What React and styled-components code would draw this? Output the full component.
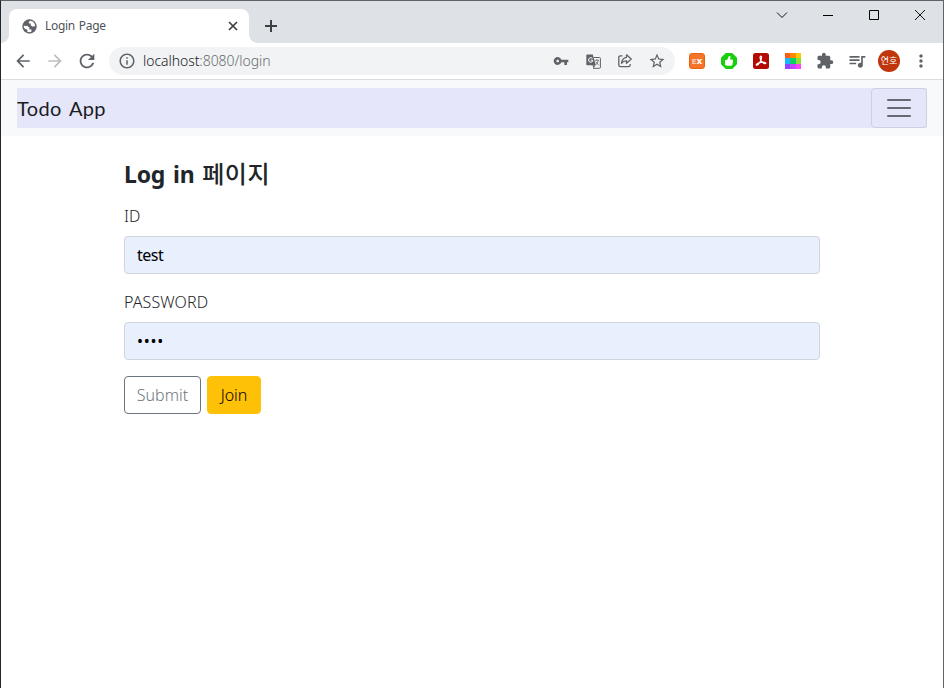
import React from "react";
import styled, { createGlobalStyle } from "styled-components";
import {
  MdArrowBack, MdArrowForward, MdRefresh, MdInfoOutline, MdVpnKey,
  MdStarBorder, MdExtension, MdQueueMusic, MdMoreVert,
} from "react-icons/md";

const Global = createGlobalStyle`
  *, *::before, *::after { box-sizing: border-box; }
  body { margin: 0; overflow: hidden; background: #fff; }
  button, input { font: inherit; }
`;

const Window = styled.div`
  display: flex;
  flex-direction: column;
  width: 944px;
  height: 688px;
  border: 1px solid #626366;
  border-left-color: #25262a;
  border-bottom: 0;
  background: #fff;
  font-family: "Noto Sans", "Noto Sans CJK KR", sans-serif;
`;

const TabStrip = styled.header`
  display: flex;
  height: 42px;
  flex: none;
  padding-left: 8px;
  background: #dee1e6;
`;

const Tab = styled.div`
  position: relative;
  display: flex;
  align-items: center;
  width: 240px;
  height: 34px;
  margin-top: 8px;
  padding: 0 9px 0 13px;
  border-radius: 8px 8px 0 0;
  background: #fff;
  color: #5f6368;
  &::before, &::after {
    content: "";
    position: absolute;
    bottom: 0;
    width: 8px;
    height: 8px;
  }
  &::before { left: -8px; background: radial-gradient(circle at 0 0, transparent 7.5px, #fff 8px); }
  &::after { right: -8px; background: radial-gradient(circle at 100% 0, transparent 7.5px, #fff 8px); }
`;

const TabTitle = styled.span`
  flex: 1;
  margin-left: 8px;
  font-size: 12px;
  font-weight: 400;
  letter-spacing: -0.3px;
  word-spacing: 1px;
  line-height: 16px;
  color: #505458;
`;

const PlainButton = styled.button`
  display: grid;
  place-items: center;
  flex: none;
  width: ${(p) => p.$w || 32}px;
  height: ${(p) => p.$h || 32}px;
  padding: 0;
  border: 0;
  background: none;
  color: ${(p) => p.$color || "#5f6368"};
  svg { display: block; }
`;

const NewTab = styled(PlainButton)`
  margin: 9px 0 0 6px;
`;

const Captions = styled.div`
  display: flex;
  margin-left: auto;
`;

const Toolbar = styled.div`
  display: flex;
  align-items: center;
  flex: none;
  height: 37px;
  padding-left: 6px;
  border-bottom: 1px solid #dadce0;
`;

const Omnibox = styled.div`
  display: flex;
  align-items: center;
  width: 566px;
  height: 28px;
  margin: 0 6px;
  padding: 0 2px 0 9px;
  border-radius: 14px;
  background: #f1f3f4;
  color: #5f6368;
`;

const Address = styled.span`
  flex: 1;
  margin-left: 7px;
  font-size: 14px;
  letter-spacing: -0.06px;
  line-height: 20px;
  color: #696d72;
  font-weight: 350;
`;

const Host = styled.span`
  color: #202124;
`;

const Avatar = styled.span`
  display: grid;
  place-items: center;
  width: 22px;
  height: 22px;
  border-radius: 50%;
  background: #bf360c;
  color: #fff;
  font: 9px/12px "Noto Sans CJK KR", sans-serif;
`;

const Badge = styled.span`
  display: grid;
  place-items: center;
  width: 16px;
  height: 16px;
  border-radius: 3px;
  border: 1px solid #e8640c;
  background: #f4742a;
  color: #fff;
  font: bold 9px/14px "DejaVu Sans", sans-serif;
`;

const BadgeFaint = styled.span`
  font-size: 7px;
  opacity: 0.65;
`;

const Navbar = styled.nav`
  flex: none;
  height: 56px;
  padding: 8px 16px;
  background: #f8f9fa;
`;

const NavInner = styled.div`
  display: flex;
  align-items: center;
  justify-content: space-between;
  height: 40px;
  background: #e6e6fa;
`;

const Brand = styled.a`
  font-family: Lato, sans-serif;
  font-size: 20px;
  line-height: 30px;
  letter-spacing: 0.35px;
  word-spacing: 2.5px;
  color: #1b1c1e;
`;

const Toggler = styled.button`
  display: grid;
  place-items: center;
  width: 56px;
  height: 40px;
  padding: 0;
  border: 1px solid #cfcfe2;
  border-radius: 4px;
  background: transparent;
  color: #676873;
`;

const Container = styled.main`
  width: 720px;
  margin: 0 auto;
  padding: 22px 12px 0;
`;

const Title = styled.h2`
  height: 29px;
  margin: 0 0 17px;
  font: 700 23px/29px "Noto Sans", sans-serif;
  letter-spacing: -0.2px;
  word-spacing: 2px;
  color: #212529;
`;

const Korean = styled.span`
  font-family: "Noto Sans CJK KR", sans-serif;
  font-size: 24px;
  font-weight: 500;
  letter-spacing: 0.6px;
`;

const Field = styled.div`
  display: flex;
  flex-direction: column;
  margin-bottom: 16px;
`;

const Label = styled.label`
  height: 24px;
  margin-bottom: 8px;
  font-size: 16px;
  font-weight: 350;
  line-height: 24px;
  letter-spacing: 0.1px;
  color: #212529;
`;

const Input = styled.input`
  width: 100%;
  height: 38px;
  padding: 6px 12px;
  border: 1px solid #ced4da;
  border-radius: 4px;
  outline: 0;
  background: #e8f0fe;
  color: #000;
  font-size: 16px;
  line-height: 24px;
  letter-spacing: ${(p) => p.$tracking || 0}px;
`;

const Actions = styled.div`
  display: flex;
  gap: 6px;
`;

const Button = styled.button`
  width: ${(p) => p.$w}px;
  height: 38px;
  padding: 0;
  border: 1px solid ${(p) => (p.$warning ? "#ffc107" : "#6c757d")};
  border-radius: 4px;
  background: ${(p) => (p.$warning ? "#ffc107" : "#fff")};
  color: ${(p) => (p.$warning ? "#000" : "#6c757d")};
  font-size: 16px;
  font-weight: 350;
  line-height: 24px;
`;

const Stroke = ({ d, size = 16, width = 1, cap }) => (
  <svg width={size} height={size} viewBox={`0 0 ${size} ${size}`} fill="none" stroke="currentColor" strokeWidth={width} strokeLinecap={cap}>
    <path d={d} />
  </svg>
);

const GlobeIcon = () => (
  <svg width="15" height="15" viewBox="0 0 15 15">
    <circle cx="7.500" cy="7.500" r="7.200" fill="currentColor" />
    <path d="M8.200 1.800Q6 3 6.800 4.200L9 4.700 8.600 6.300 10.500 7.500 13.200 7.200Q13.200 4 10.800 2.500Z" fill="#fff" />
    <path d="M1.800 6.800 5.500 7 7.500 8.700 7 10.200 9.500 10.500 9.300 12.800Q7 13.600 5.200 12.800L5.500 10.800Q2.800 10.500 1.800 8.500Z" fill="#fff" />
  </svg>
);

const TranslateIcon = () => (
  <svg width="15" height="15" viewBox="0 0 15 15">
    <path d="M8 3.500h5.500q.9 0 .9.900v9q0 .9-.9.900H7" fill="none" stroke="currentColor" strokeWidth="1" />
    <path d="M1.300.5h5.500L9.800 11.300H1.300Q.3 11.300.3 10.300V1.500Q.3.500 1.300.5Z" fill="currentColor" />
    <path d="M9.500 11.300H6.500L7.500 14.200Z" fill="currentColor" />
    <path d="M6.400 4.300Q4.800 2.900 3.200 4.300 1.800 6 3.200 7.700 5 9 6.500 7.500V6.200H4.700" fill="none" stroke="#fff" strokeWidth="1" />
    <path d="M9 6.300h4M11 5.200v1M12.300 6.500Q11.500 9.500 9.500 11M9.800 7.800l3 3.400" fill="none" stroke="currentColor" strokeWidth=".8" />
  </svg>
);

const ShareIcon = () => (
  <svg width="16" height="16" viewBox="0 0 16 16" fill="none" stroke="currentColor" strokeWidth="1.300" strokeLinejoin="round">
    <path d="M5.500 2.800H3.500Q1.800 2.800 1.800 4.500v7.500Q1.800 13.700 3.500 13.700h8q1.700 0 1.700-1.700V11" />
    <path d="M9.500 1.800 14.300 6l-4.800 4.200V7.900Q6.300 7.700 4.500 10.300 5 5 9.500 4.300Z" />
  </svg>
);

const ThumbIcon = () => (
  <svg width="16" height="16" viewBox="0 0 16 16">
    <path d="M4.800 0h6.400L16 4.800v6.400L11.200 16H4.800L0 11.200V4.800Z" fill="#17cf0b" />
    <path d="M4 7h2l2-4q1.500-.3 1.500 1.200L9 6.500h2.300q1 .2.800 1.200l-.7 4q-.2 1-1.200 1H6L4 12Z" fill="#fff" />
  </svg>
);

const PdfIcon = () => (
  <svg width="16" height="16" viewBox="0 0 16 16">
    <rect width="16" height="16" rx="2.500" fill="#b30b00" />
    <path d="M7.600 3.200C9 3.100 8.700 5.500 7.600 7.800 6.400 10.400 4.700 12.500 3.500 12.100 2.600 11.500 4.700 9.800 8 9.300c2.500-.4 4.700-.2 4.900.8-.3 1.300-3.300.2-4.700-2.300C7.200 6 6.700 3.700 7.600 3.200Z" fill="none" stroke="#fff" strokeWidth="1.200" />
  </svg>
);

const swatches = ["#ff5a1e", "#ff8a00", "#ffc800", "#19b5fe", "#0ccf6a", "#8ae234", "#8b46ff", "#c845ff", "#ff44f5"];
const PaletteIcon = () => (
  <svg width="16" height="16" viewBox="0 0 16 16" shapeRendering="crispEdges">
    {swatches.map((c, i) => (
      <rect key={c} x={[0, 5, 11][i % 3]} y={[0, 5, 11][Math.floor(i / 3)]} width="6" height="6" fill={c} />
    ))}
  </svg>
);

export default function App() {
  return (
    <Window>
      <Global />
      <TabStrip>
        <Tab>
          <GlobeIcon />
          <TabTitle>Login Page</TabTitle>
          <PlainButton $w={14} $h={16} $color="#3c4043" aria-label="Close tab">
            <Stroke size={14} width={1.7} d="M3 3l8 8M11 3l-8 8" />
          </PlainButton>
        </Tab>
        <NewTab $color="#3c4043" aria-label="New tab">
          <Stroke size={14} width={2} d="M7 1v12M1 7h12" />
        </NewTab>
        <Captions>
          <PlainButton $w={46} $h={28} $color="#111" aria-label="Search tabs"><Stroke size={12} d="M1 3.500l5 5 5-5" /></PlainButton>
          <PlainButton $w={46} $h={28} $color="#000" aria-label="Minimize"><Stroke size={10} d="M0 5.500h10" /></PlainButton>
          <PlainButton $w={46} $h={28} $color="#000" aria-label="Maximize"><Stroke size={10} d="M.5.5h9v9h-9z" /></PlainButton>
          <PlainButton $w={46} $h={28} $color="#111" aria-label="Close"><Stroke size={10} d="M0 0l10 10M10 0L0 10" /></PlainButton>
        </Captions>
      </TabStrip>
      <Toolbar>
        <PlainButton aria-label="Back"><MdArrowBack size={20} /></PlainButton>
        <PlainButton $color="#bcbec1" aria-label="Forward"><MdArrowForward size={20} /></PlainButton>
        <PlainButton aria-label="Reload"><MdRefresh size={22} /></PlainButton>
        <Omnibox>
          <MdInfoOutline size={18} />
          <Address><Host>localhost</Host>:8080/login</Address>
          <PlainButton><MdVpnKey size={16} /></PlainButton>
          <PlainButton><TranslateIcon /></PlainButton>
          <PlainButton><ShareIcon /></PlainButton>
          <PlainButton><MdStarBorder size={18} /></PlainButton>
        </Omnibox>
        <PlainButton><Badge><span><BadgeFaint>E</BadgeFaint>x</span></Badge></PlainButton>
        <PlainButton><ThumbIcon /></PlainButton>
        <PlainButton><PdfIcon /></PlainButton>
        <PlainButton><PaletteIcon /></PlainButton>
        <PlainButton><MdExtension size={18} /></PlainButton>
        <PlainButton><MdQueueMusic size={20} /></PlainButton>
        <PlainButton><Avatar>연호</Avatar></PlainButton>
        <PlainButton><MdMoreVert size={20} /></PlainButton>
      </Toolbar>
      <Navbar>
        <NavInner>
          <Brand>Todo App</Brand>
          <Toggler aria-label="Toggle navigation">
            <Stroke size={30} width={2} cap="round" d="M4 7h22M4 15h22M4 23h22" />
          </Toggler>
        </NavInner>
      </Navbar>
      <Container>
        <Title>Log in <Korean>페이지</Korean></Title>
        <Field>
          <Label htmlFor="id">ID</Label>
          <Input id="id" defaultValue="test" $tracking={-0.5} />
        </Field>
        <Field>
          <Label htmlFor="pw">PASSWORD</Label>
          <Input id="pw" type="password" defaultValue="test" $tracking={0.7} />
        </Field>
        <Actions>
          <Button $w={77}>Submit</Button>
          <Button $w={54} $warning>Join</Button>
        </Actions>
      </Container>
    </Window>
  );
}
